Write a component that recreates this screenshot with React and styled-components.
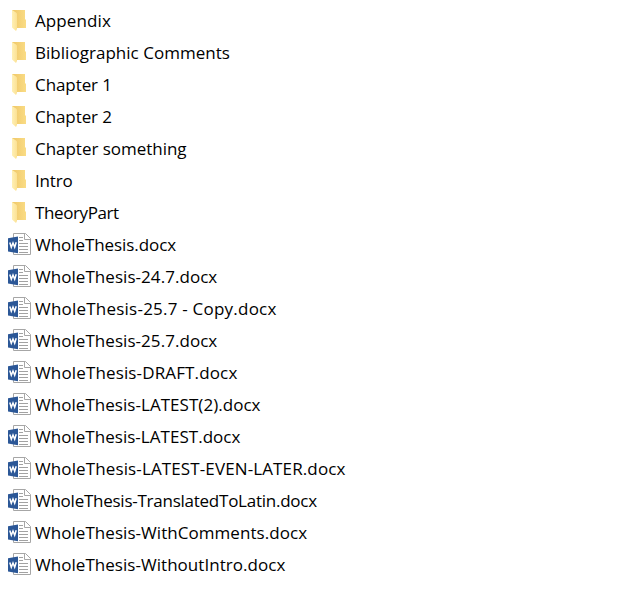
import React from "react";
import styled, { createGlobalStyle } from "styled-components";

const GlobalStyle = createGlobalStyle`
  body { margin: 0; background: #fff; }
`;

const FileList = styled.ul`
  list-style: none;
  margin: 0;
  padding: 5px 0 29px 8px;
  min-height: 610px;
  box-sizing: border-box;
  font-family: "Segoe UI", "Open Sans", "Noto Sans", sans-serif;
  font-size: 17px;
  color: #000;
`;

const FileRow = styled.li`
  display: flex;
  align-items: flex-start;
  height: 32px;
`;

const IconSlot = styled.span`
  display: flex;
  flex: none;
  width: 27px;
  height: 32px;
`;

const FileName = styled.span`
  line-height: 31px;
  white-space: pre;
  letter-spacing: ${(p) => p.$tracking}px;
`;

const FolderIcon = () => (
  <svg width="24" height="32" viewBox="0 0 24 32">
    <defs>
      <linearGradient id="folderBack" x1="0" x2="1">
        <stop offset="0" stopColor="#efc768" />
        <stop offset="1" stopColor="#fadc85" />
      </linearGradient>
      <linearGradient id="folderFront" x1="0" x2="1">
        <stop offset="0" stopColor="#fff0b5" />
        <stop offset="1" stopColor="#fbe194" />
      </linearGradient>
    </defs>
    <path d="M4 5H17V14L18 15V23H8Z" fill="url(#folderBack)" />
    <path d="M4 5L8 7.5Q9 8 9 9V24L8 26L4 22.5Z" fill="url(#folderFront)" />
  </svg>
);

const WordIcon = () => (
  <svg width="24" height="32" viewBox="0 0 24 32">
    <path d="M5.5 4.5H17.5L22.5 9.5V25.5H5.5Z" fill="#fff" stroke="#a6a6a6" />
    <path d="M16.5 4.5V10.5H22.5" fill="none" stroke="#a6a6a6" />
    <path d="M11 8.5H15M11 11.5H15M11 14.5H20M11 17.5H20M11 20.5H20M11 23.5H20" stroke="#a2a2a2" />
    <path d="M0 9.3L10 7.5V24.3L0 22.5Z" fill="#2b5797" />
    <path d="M1.8 13.5L3.3 18.2L5 14L6.7 18.2L8.2 13.3" fill="none" stroke="#fff" strokeWidth="1.5" />
  </svg>
);

const entries = [
  ["folder", "Appendix", 0.1],
  ["folder", "Bibliographic Comments", 0.03],
  ["folder", "Chapter 1", -0.08],
  ["folder", "Chapter 2", -0.08],
  ["folder", "Chapter something", -0.03],
  ["folder", "Intro", -0.15],
  ["folder", "TheoryPart", -0.4],
  ["word", "WholeThesis.docx", -0.06],
  ["word", "WholeThesis-24.7.docx", 0.05],
  ["word", "WholeThesis-25.7 - Copy.docx", 0.22],
  ["word", "WholeThesis-25.7.docx", 0.05],
  ["word", "WholeThesis-DRAFT.docx", 0.14],
  ["word", "WholeThesis-LATEST(2).docx", 0.04],
  ["word", "WholeThesis-LATEST.docx", 0.03],
  ["word", "WholeThesis-LATEST-EVEN-LATER.docx", 0.12],
  ["word", "WholeThesis-TranslatedToLatin.docx", -0.25],
  ["word", "WholeThesis-WithComments.docx", 0.05],
  ["word", "WholeThesis-WithoutIntro.docx", 0.04],
];

export default function App() {
  return (
    <>
      <GlobalStyle />
      <FileList>
        {entries.map(([kind, name, tracking]) => (
          <FileRow key={name}>
            <IconSlot>{kind === "folder" ? <FolderIcon /> : <WordIcon />}</IconSlot>
            <FileName $tracking={tracking}>{name}</FileName>
          </FileRow>
        ))}
      </FileList>
    </>
  );
}
